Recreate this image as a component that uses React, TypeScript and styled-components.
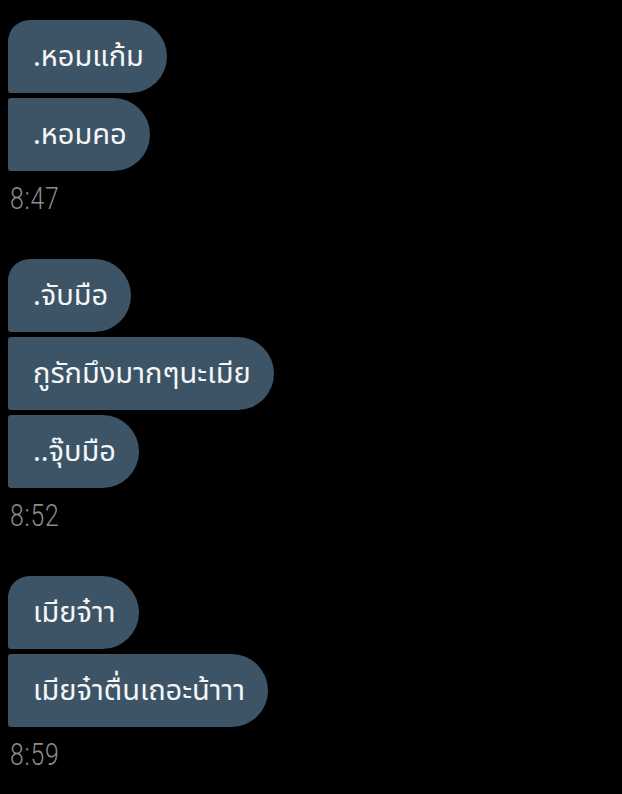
import React from "react";
import styled, { createGlobalStyle } from "styled-components";

const Global = createGlobalStyle`
  html, body { margin: 0; padding: 0; background: #000; }
  body { width: 622px; height: 794px; overflow: hidden; }
`;

const Page = styled.div`
  width: 622px;
  height: 794px;
  background: #000;
  box-sizing: border-box;
  padding: 20px 0 0 8px;
  display: flex;
  flex-direction: column;
  gap: 45px;
  font-family: "Noto Sans Thai", "Noto Sans", "DejaVu Sans", sans-serif;
`;

const Group = styled.div`
  display: flex;
  flex-direction: column;
  align-items: flex-start;
`;

const Stack = styled.div`
  display: flex;
  flex-direction: column;
  align-items: flex-start;
  gap: 5px;
`;

const Bubble = styled.div<{ $first?: boolean }>`
  height: 73px;
  box-sizing: border-box;
  padding: 0 23px 0 25px;
  display: flex;
  align-items: center;
  background: #3d5466;
  color: #f4f6f8;
  font-size: 29px;
  white-space: nowrap;
  border-radius: ${(p) => (p.$first ? "22px" : "3px")} 37px 37px 3px;
`;

const Time = styled.div`
  margin: 13px 0 0 2px;
  color: #8c8c8c;
  font-family: Roboto, "DejaVu Sans", sans-serif;
  font-weight: 300;
  font-size: 31px;
  line-height: 30px;
  letter-spacing: 1px;
  transform: scaleX(0.8);
  transform-origin: left center;
`;

const groups = [
  { msgs: [".หอมแก้ม", ".หอมคอ"], time: "8:47" },
  { msgs: [".จับมือ", "กูรักมึงมากๆนะเมีย", "..จุ๊บมือ"], time: "8:52" },
  { msgs: ["เมียจ๋าา", "เมียจ๋าตื่นเถอะน้าาา"], time: "8:59" },
];

export default function App() {
  return (
    <>
      <Global />
      <Page>
        {groups.map((g) => (
          <Group key={g.time}>
            <Stack>
              {g.msgs.map((m, i) => (
                <Bubble key={m} $first={i === 0}>
                  {m}
                </Bubble>
              ))}
            </Stack>
            <Time>{g.time}</Time>
          </Group>
        ))}
      </Page>
    </>
  );
}
